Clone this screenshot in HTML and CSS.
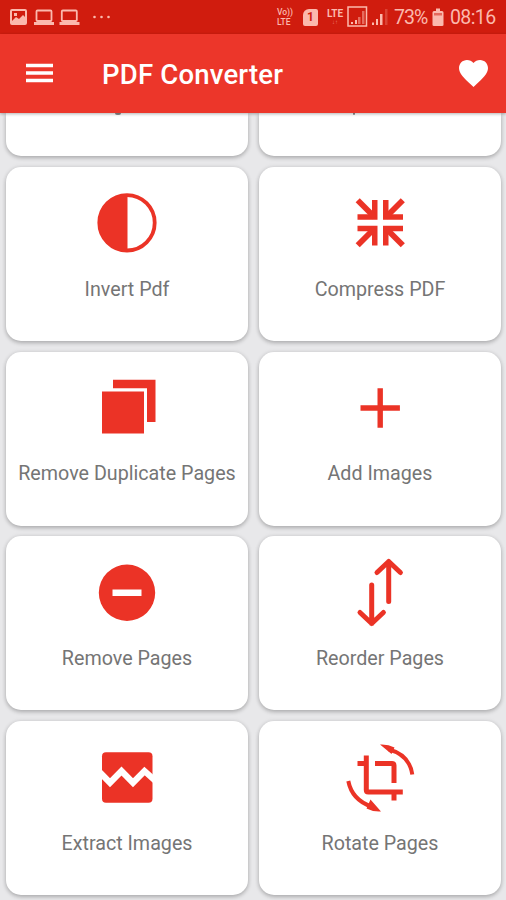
FILE: index.html
```
<!DOCTYPE html>
<html lang="en">
<head>
<meta charset="utf-8">
<title>PDF Converter</title>
<link rel="stylesheet" href="styles.css">
</head>
<body>
<div class="status">
  <svg class="status-left" width="120" height="34" viewBox="0 0 120 34">
    <path fill-rule="evenodd" d="M12 9h13q2 0 2 2v12q0 2-2 2H12q-2 0-2-2V11q0-2 2-2zM12 11v10l4-4 3 2 4-4 2 2v-6zM14 13h3v3h-3z"/>
    <g fill="none" stroke="#fbb9ad" stroke-width="1.8"><rect x="36.500" y="10.500" width="15" height="10.500" rx="1"/><rect x="61.800" y="10.500" width="15" height="10.500" rx="1"/></g>
    <path d="M34 22h20v3H34zM59.500 22h20v3h-20z"/>
    <circle cx="94.500" cy="17" r="1.300"/><circle cx="101.500" cy="17" r="1.300"/><circle cx="108.500" cy="17" r="1.300"/>
  </svg>
  <div class="status-right">
    <span class="volte"><b>Vo))</b><b>LTE</b></span>
    <span class="sim">1</span>
    <span class="lte">LTE<small>↓↑</small></span>
    <svg class="signals" width="43" height="34" viewBox="0 0 43 34">
      <rect x="1" y="7" width="18.500" height="19" fill="none" stroke="#fbb9ad" stroke-width="1.500"/>
      <path d="M4 22h2v2H4zM8 20h2v4H8zM25 22.500h2V25h-2zM29 19h2v6h-2zM33 14h2.500v11H33z"/>
      <path opacity=".5" d="M11 17h2.500v7H11zM15 11h2.500v13H15z"/><path opacity=".25" d="M38 9h2.500v16H38z"/>
    </svg>
    <span class="percent">73%</span>
    <svg class="battery" width="12" height="34" viewBox="0 0 12 34"><path d="M4 8.500h4V11h2q1.500 0 1.500 1.500V25q0 1-1.500 1H2q-1.500 0-1.500-1V12.500Q.5 11 2 11h2z"/><path d="M2 13h8v2.500H2z" fill="#e5685b"/></svg>
    <span class="clock">08:16</span>
  </div>
</div>
<header class="bar">
  <svg class="menu" width="27" height="20" viewBox="0 0 27 20"><path d="M0 .8h27v3.400H0zM0 8.300h27v3.400H0zM0 15.800h27v3.400H0z"/></svg>
  <h1>PDF Converter</h1>
  <svg class="heart" width="29" height="27" viewBox="2 3 20 18.350" preserveAspectRatio="none"><path d="M12 21.350l-1.450-1.320C5.400 15.360 2 12.280 2 8.500 2 5.420 4.420 3 7.500 3c1.740 0 3.410.81 4.500 2.090C13.090 3.810 14.760 3 16.500 3 19.580 3 22 5.420 22 8.500c0 3.780-3.400 6.860-8.550 11.540z"/></svg>
</header>
<main class="grid">
  <div class="card cut"><i class="tail tail-g"></i></div>
  <div class="card cut"><i class="tail tail-p"></i></div>

  <div class="card">
    <svg viewBox="0 0 76 76"><circle cx="38" cy="37.800" r="27.700" fill="none" stroke="#eb3326" stroke-width="3.800"/><path d="M38.500 9v57.600H38a28.800 28.800 0 0 1 0-57.600z"/></svg>
    <span>Invert Pdf</span>
  </div>
  <div class="card">
    <svg viewBox="0 0 76 76"><defs><g id="inward"><path d="M30 15h5.500V34.800H15.500v-5.500H30z"/><path d="M15.700 15.200l17 17" stroke="#eb3326" stroke-width="5.800"/></g></defs>
      <use href="#inward"/><use href="#inward" transform="matrix(-1 0 0 1 76.500 0)"/><use href="#inward" transform="matrix(1 0 0 -1 0 75.500)"/><use href="#inward" transform="matrix(-1 0 0 -1 76.500 75.500)"/></svg>
    <span>Compress PDF</span>
  </div>

  <div class="card">
    <svg viewBox="0 0 76 76"><path d="M13 21.500h42v42H13zM24 9.800h42.500V52H58V18.300H24z"/></svg>
    <span>Remove Duplicate Pages</span>
  </div>
  <div class="card">
    <svg viewBox="0 0 76 76"><path d="M35.500 18.300h5.400v17h17v5.400h-17v17h-5.400v-17h-17v-5.400h17z"/></svg>
    <span>Add Images</span>
  </div>

  <div class="card">
    <svg viewBox="0 0 76 76"><path fill-rule="evenodd" d="M38 9.600a28.200 28.200 0 1 1 0 56.400a28.200 28.200 0 1 1 0-56.400zM23.500 34.500v6.600h29v-6.600z"/></svg>
    <span>Remove Pages</span>
  </div>
  <div class="card">
    <svg viewBox="0 0 76 76"><path class="line" stroke-linecap="round" stroke-linejoin="round" d="M46.700 46.500V6.500M35 17.500l11.700-11 11.700 11M29.700 30v38.500M18 57.500l11.700 11 11.700-11"/></svg>
    <span>Reorder Pages</span>
  </div>

  <div class="card">
    <svg viewBox="0 0 76 76"><rect x="13" y="12.200" width="50.500" height="50.500" rx="4"/><path fill="none" stroke="#fff" stroke-width="6.300" d="M10 31.500l11 11.300L32.500 31 44 42.800 55.500 31 66 40.500"/></svg>
    <span>Extract Images</span>
  </div>
  <div class="card">
    <svg viewBox="0 0 76 76"><path class="line" d="M24.300 15.500V50q0 2 2 2h34.500M15.500 23.500h8.800M33 23.500h17q2 0 2 2V43M52 52v8.500"/><path class="arc" d="M47 9.500Q67.500 15 70.300 34.500M29.500 66.500Q10 60 6.300 41"/><path d="M38 4.500q8-.5 14.500 3L49.500 14zM39 71.500q-8 .5-14.500-3l4-9z"/></svg>
    <span>Rotate Pages</span>
  </div>
</main>
</body>
</html>
```
FILE: styles.css
```
* { box-sizing: border-box; }
body {
  margin: 0;
  height: 900px;
  overflow: hidden;
  display: flex;
  flex-direction: column;
  background: #e8e8ea;
  font-family: Roboto, "Liberation Sans", sans-serif;
}
svg { display: block; flex: none; }
.status {
  flex: none;
  height: 34px;
  display: flex;
  justify-content: space-between;
  background: #d01c0e;
  color: #fbb9ad;
  fill: #fbb9ad;
}
.status-right { display: flex; align-items: center; padding-right: 10px; }
.volte { display: flex; flex-direction: column; width: 18px; margin-right: 8px; font-size: 8.500px; line-height: 10px; white-space: nowrap; }
.volte b { font-weight: 500; }
.sim {
  width: 15px; height: 17px; margin-right: 8px;
  background: #fbb9ad; color: #d01c0e;
  border-radius: 2px; border-top-left-radius: 6px;
  font-size: 12px; line-height: 17px; font-weight: 700; text-align: center;
}
.lte { width: 18px; margin-right: 3px; font-size: 10px; line-height: 9px; font-weight: 700; text-align: center; }
.lte small { display: block; font-size: 6px; line-height: 7px; opacity: .6; }
.signals { margin-right: 4px; }
.percent, .clock { font-size: 19.500px; line-height: 34px; padding-top: 2px; }
.percent { width: 33px; margin-right: 5px; letter-spacing: -0.900px; }
.battery { margin-right: 6px; }
.clock { width: 46px; letter-spacing: -0.600px; }
.bar {
  flex: none;
  height: 79px;
  display: flex;
  align-items: center;
  padding: 0 18px 1px 26px;
  background: #ec362a;
  color: #fff;
  fill: #fff;
  box-shadow: 0 1px 3px rgba(0, 0, 0, .3);
  z-index: 1;
}
.bar h1 { flex: 1; margin: 3px 0 0 49px; font-size: 27.500px; line-height: 32px; font-weight: 500; letter-spacing: 0.200px; }
.grid {
  display: grid;
  grid-template-columns: 242px 242px;
  grid-template-rows: 43.300px repeat(4, 174px);
  gap: 10.700px 11px;
  padding: 0 6px;
}
.card {
  position: relative;
  display: flex;
  flex-direction: column;
  align-items: center;
  padding-top: 18.500px;
  border-radius: 15px;
  background: #fff;
  box-shadow: 0 2px 4px rgba(0, 0, 0, .23), 0 0 5px rgba(0, 0, 0, .08);
}
.card svg { width: 76px; height: 76px; fill: #eb3326; overflow: visible; }
.card .line { fill: none; stroke: #eb3326; stroke-width: 5; }
.card .arc { fill: none; stroke: #eb3326; stroke-width: 4; }
.card span { margin-top: 16.200px; font-size: 19.700px; line-height: 24px; color: #757575; white-space: nowrap; }
.card.cut { border-top-left-radius: 0; border-top-right-radius: 0; }
.tail { position: absolute; top: 0; height: 2px; background: #8b8b8b; border-radius: 0 0 2px 2px; }
.tail-g { left: 109px; width: 6px; }
.tail-p { left: 94px; width: 2px; }
```
